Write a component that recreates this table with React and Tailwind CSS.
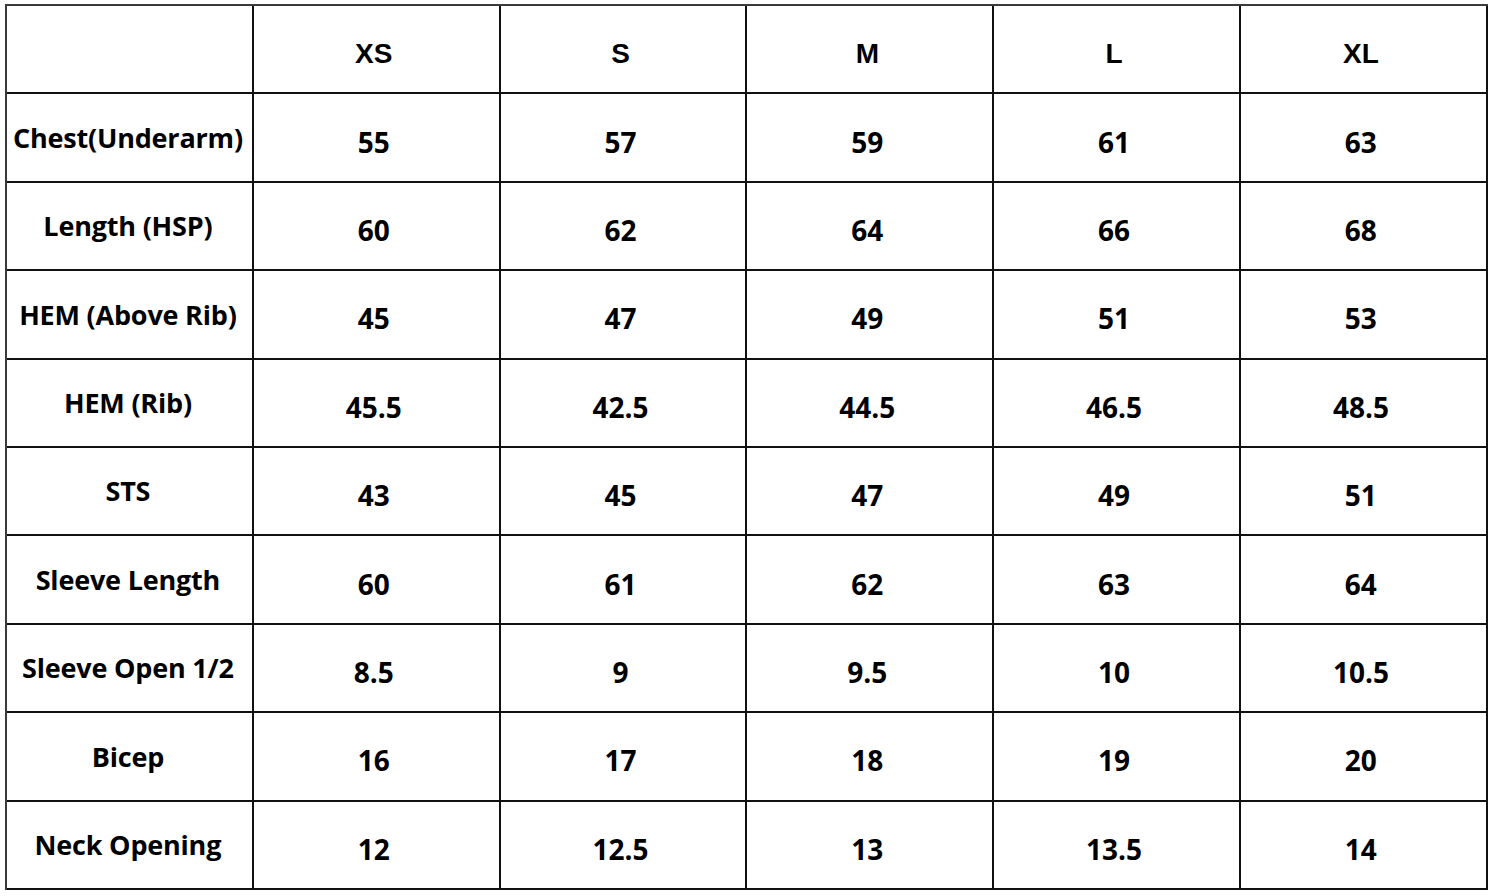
import React from "react";

const sizes = ["XS", "S", "M", "L", "XL"];
const rows = [
  ["Chest(Underarm)", "55", "57", "59", "61", "63"],
  ["Length (HSP)", "60", "62", "64", "66", "68"],
  ["HEM (Above Rib)", "45", "47", "49", "51", "53"],
  ["HEM (Rib)", "45.5", "42.5", "44.5", "46.5", "48.5"],
  ["STS", "43", "45", "47", "49", "51"],
  ["Sleeve Length", "60", "61", "62", "63", "64"],
  ["Sleeve Open 1/2", "8.5", "9", "9.5", "10", "10.5"],
  ["Bicep", "16", "17", "18", "19", "20"],
  ["Neck Opening", "12", "12.5", "13", "13.5", "14"],
];

export default function App() {
  return (
    <div className="w-[1494px] h-[896px] bg-white pt-[4px] pl-[5px]">
      <div className="grid grid-cols-[repeat(6,246.8px)] grid-rows-[repeat(10,88.4px)] border-t-2 border-l-2 border-[#3a3a3a] w-fit text-black">
        <div className="border-r-2 border-b-2 border-[#111]" />
        {sizes.map((s) => (
          <div
            key={s}
            className="border-r-2 border-b-2 border-[#111] flex items-center justify-center pt-[10px] pr-[5px] text-[28px] font-bold"
            style={{ fontFamily: '"Liberation Sans", Arial, sans-serif' }}
          >
            {s}
          </div>
        ))}
        {rows.map((r) =>
          r.map((c, i) => (
            <div
              key={r[0] + i}
              className={
                "border-r-2 border-b-2 border-[#111] flex items-center justify-center font-bold " +
                (i === 0
                  ? "pt-[1px] pr-[3px] text-[27px] tracking-[-0.2px]"
                  : "pt-[8px] pr-[5px] text-[28px]")
              }
              style={{ fontFamily: '"Open Sans", sans-serif' }}
            >
              {c}
            </div>
          ))
        )}
      </div>
    </div>
  );
}
